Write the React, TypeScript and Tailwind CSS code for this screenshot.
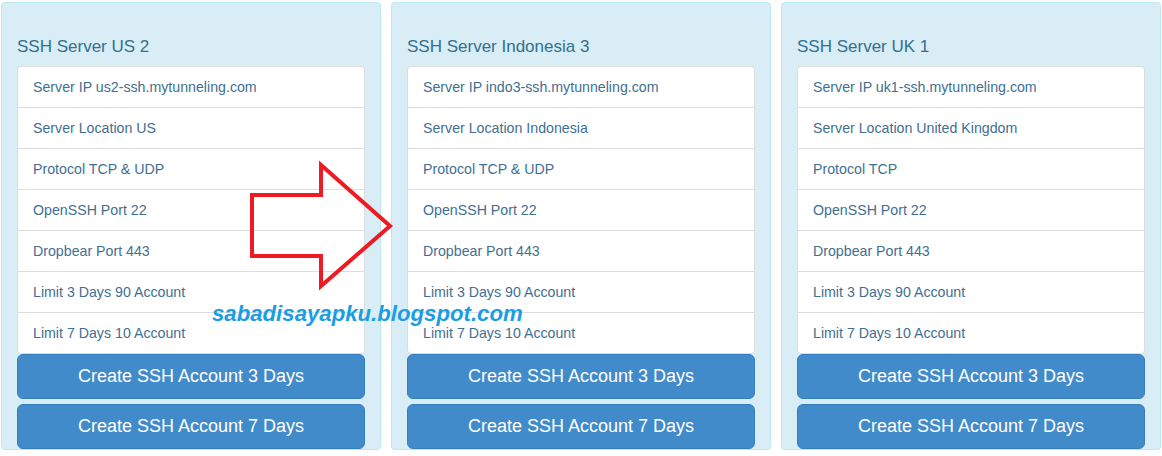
import React from "react";

type Server = {
  name: string;
  host: string;
  location: string;
  protocol: string;
};

const servers: Server[] = [
  { name: "SSH Server US 2", host: "us2-ssh.mytunneling.com", location: "US", protocol: "TCP & UDP" },
  { name: "SSH Server Indonesia 3", host: "indo3-ssh.mytunneling.com", location: "Indonesia", protocol: "TCP & UDP" },
  { name: "SSH Server UK 1", host: "uk1-ssh.mytunneling.com", location: "United Kingdom", protocol: "TCP" },
];

function ServerPanel({ s }: { s: Server }) {
  const rows = [
    `Server IP ${s.host}`,
    `Server Location ${s.location}`,
    `Protocol ${s.protocol}`,
    "OpenSSH Port 22",
    "Dropbear Port 443",
    "Limit 3 Days 90 Account",
    "Limit 7 Days 10 Account",
  ];
  return (
    <div className="w-[380px] h-[448px] shrink-0 rounded-[4px] border border-[#bce8f1] bg-[#d9edf7] px-[15px] pt-[34px] flex flex-col">
      <h3 className="text-[17px] leading-[19px] text-[#31708f] font-normal">{s.name}</h3>
      <ul className="mt-[10px] bg-white border border-[#dddddd] rounded-[4px]">
        {rows.map((r, i) => (
          <li
            key={r}
            className={`h-[40px] flex items-center px-[15px] pt-[2px] text-[14.2px] text-[#3f6f92] ${
              i < rows.length - 1 ? "border-b border-[#dddddd] h-[41px]" : ""
            }`}
          >
            {r}
          </li>
        ))}
      </ul>
      <div className="flex flex-col gap-[5px]">
        {["Create SSH Account 3 Days", "Create SSH Account 7 Days"].map((t) => (
          <button
            key={t}
            className="h-[45px] w-full rounded-[6px] border border-[#357ebd] bg-[#428bca] text-white text-[18px]"
          >
            {t}
          </button>
        ))}
      </div>
    </div>
  );
}

export default function App() {
  return (
    <div
      className="relative w-[1162px] h-[456px] bg-white pl-[1px] pt-[2px] overflow-hidden"
      style={{ fontFamily: '"Liberation Sans", Arial, sans-serif' }}
    >
      <div className="flex gap-[10px]">
        {servers.map((s) => (
          <ServerPanel key={s.name} s={s} />
        ))}
      </div>

      {/* red outline arrow pointing right */}
      <svg className="absolute left-0 top-0 pointer-events-none" width="1162" height="456">
        <polygon
          points="252,195 321,195 321,165 390,226 321,286 321,256 252,256"
          fill="none"
          stroke="#ed1c24"
          strokeWidth="4"
          strokeLinejoin="miter"
        />
      </svg>

      <div className="absolute left-[212px] top-[300px] text-[22.2px] leading-[28px] font-bold italic text-[#1b9de6]">
        sabadisayapku.blogspot.com
      </div>
    </div>
  );
}
